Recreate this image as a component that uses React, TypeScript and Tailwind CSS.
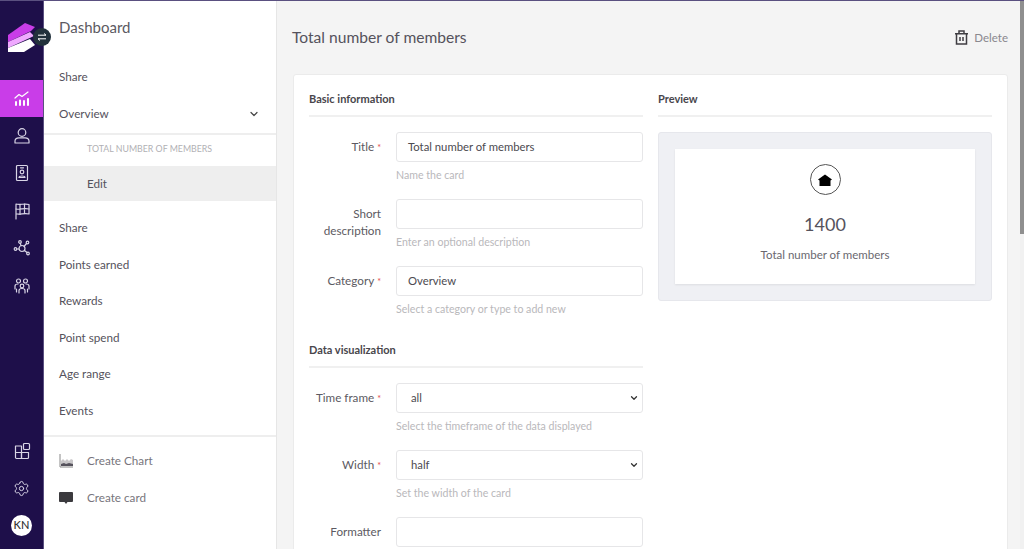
import { ChevronDown, Settings } from "lucide-react"

const font = { fontFamily: '"Lato", "Noto Sans", sans-serif' }

function NavIcon({ children, active }: { children: React.ReactNode; active?: boolean }) {
  return (
    <div className={active ? "flex h-[37px] items-center justify-center bg-[#c93de8]" : "flex h-[37.5px] items-center justify-center"}>
      <svg width="18" height="18" viewBox="0 0 18 18" fill="none" stroke="#d9d5e6" strokeWidth="1.2" strokeLinecap="round" strokeLinejoin="round">
        {children}
      </svg>
    </div>
  )
}

function Logo() {
  return (
    <div className="relative h-[79px] w-[43px]">
      <svg className="absolute left-[6px] top-[21px]" width="31" height="32" viewBox="0 0 31 32">
        <path d="M2 13 L19 1 L29 5 L25 9 L2 20 Z" fill="#c93de8" />
        <path d="M2 20 L24 10 L28 14 L2 26 Z" fill="#efa9ff" />
        <path d="M2 26 L24 17 L29 23 L18 30 L2 30 Z" fill="#ffffff" />
      </svg>
      <div className="absolute left-[33px] top-[27px] flex h-[18px] w-[18px] items-center justify-center rounded-full bg-[#22313c]">
        <svg width="10" height="8" viewBox="0 0 10 8" fill="none" stroke="#fff" strokeWidth="1">
          <path d="M1 2.200 H9 M7 .5 L9 2.200" />
          <path d="M9 5.800 H1 M3 7.500 L1 5.800" />
        </svg>
      </div>
    </div>
  )
}

function IconRail() {
  return (
    <aside className="flex w-[44px] shrink-0 flex-col border-r border-[#5a5080] bg-[#1e0f4a]">
      <Logo />
      <NavIcon active>
        <g stroke="#fff">
          <path d="M2 8 L6 4.500 L9 6.500 L15 2" />
          <path d="M3 12 V15 M7 10.500 V15 M11 11 V15 M15 9 V15" strokeWidth="2" />
        </g>
      </NavIcon>
      <NavIcon>
        <circle cx="9" cy="5.500" r="3.800" />
        <path d="M2 16 V14 C2 12 4 10.800 6 10.800 H12 C14 10.800 16 12 16 14 V16 Z" />
      </NavIcon>
      <NavIcon>
        <rect x="3.500" y="1.500" width="11" height="15" rx="1" />
        <path d="M7.500 3.800 H10.500" />
        <circle cx="9" cy="8" r="1.800" />
        <path d="M6 13.500 C6 11.500 12 11.500 12 13.500 Z" />
      </NavIcon>
      <NavIcon>
        <path d="M3 17 V2 C7 3.500 11 1 16 2.500 V12 C11 10.800 7 13 3 11.800" />
        <path d="M3 7 C7 8 11 5.800 16 7 M7 2.800 V12.300 M11.500 2.200 V11.400" />
      </NavIcon>
      <NavIcon>
        <circle cx="9" cy="9.500" r="3" />
        <circle cx="2.500" cy="10" r="1.300" />
        <circle cx="14.500" cy="3.500" r="1.300" />
        <circle cx="15" cy="14.500" r="1.300" />
        <circle cx="7" cy="3" r="1.300" />
        <path d="M4 10 H6 M11 7.500 L13.500 4.500 M11.500 11.500 L14 13.500 M7.300 4.300 L8 6.600" />
      </NavIcon>
      <NavIcon>
        <circle cx="5.500" cy="4" r="2" />
        <circle cx="12.500" cy="4" r="2" />
        <circle cx="9" cy="9" r="1.800" />
        <path d="M2 12 V9 C2 7.500 3.500 7 5 7 M16 12 V9 C16 7.500 14.500 7 13 7" />
        <path d="M6 16 V13.500 C6 12 7.500 11.500 9 11.500 C10.500 11.500 12 12 12 13.500 V16" />
        <path d="M3.500 12 V15 M14.500 12 V15" />
      </NavIcon>
      <div className="flex-1" />
      <NavIcon>
        <path d="M2.500 4 H8.500 V10.500 H2.500 Z M2.500 10.500 H8.500 V16.500 H3.500 C3 16.500 2.500 16 2.500 15.500 Z" />
        <path d="M8.500 10.500 H15.500 V15.500 C15.500 16 15 16.500 14.500 16.500 H8.500 Z" />
        <rect x="10.500" y="1.500" width="6" height="6" rx="1" />
      </NavIcon>
      <div className="flex h-[37.5px] items-center justify-center">
        <Settings size={17} strokeWidth={1.4} color="#d9d5e6" />
      </div>
      <div className="flex h-[42px] items-start justify-center pt-[7.5px]">
        <div className="flex h-[21px] w-[21px] items-center justify-center rounded-full bg-white text-[11px] font-medium text-[#333]">KN</div>
      </div>
    </aside>
  )
}

function MenuRow({ label }: { label: string }) {
  return <div className="flex h-[36.5px] items-center pl-[15px] text-[11.7px] text-[#55525c]">{label}</div>
}

function MenuPanel() {
  return (
    <aside className="flex w-[233px] shrink-0 flex-col border-r border-[#e6e6e6] bg-white">
      <div className="flex h-[58px] items-center pb-[6px] pl-[15px] text-[15px] text-[#5c5a62]">Dashboard</div>
      <MenuRow label="Share" />
      <div className="flex h-[37px] items-center justify-between pl-[15px] pr-[16px] text-[11.7px] text-[#55525c]">
        Overview
        <ChevronDown size={12} strokeWidth={2.4} color="#444" />
      </div>
      <div className="h-[33.5px] border-t-2 border-[#eeeeee] pl-[43px] pt-[7px] text-[8.8px] leading-[14px] text-[#b1b0b4]">TOTAL NUMBER OF MEMBERS</div>
      <div className="flex h-[35px] items-center bg-[#eeeeee] pl-[43px] text-[11.7px] text-[#55525c]">Edit</div>
      <div className="h-[9px]" />
      <MenuRow label="Share" />
      <MenuRow label="Points earned" />
      <MenuRow label="Rewards" />
      <MenuRow label="Point spend" />
      <MenuRow label="Age range" />
      <MenuRow label="Events" />
      <div className="mt-[6px] border-t-2 border-[#eeeeee] pt-[6px]">
        <div className="flex h-[36.5px] items-center gap-[14px] pl-[15px] text-[11.7px] text-[#77757c]">
          <svg width="14" height="14" viewBox="0 0 14 14">
            <path d="M1 0 V13 H14" fill="none" stroke="#888" strokeWidth="1" />
            <path d="M2 12 V7 L4 5 L6 7 L8 5 L10 7 L12 5 L14 6 V12 Z" fill="#c9c7c9" />
            <path d="M2 12 V10 L5 9 L7 10 L10 9 L14 10 V12 Z" fill="#55525c" />
          </svg>
          Create Chart
        </div>
        <div className="flex h-[36.5px] items-center gap-[14px] pl-[15px] text-[11.7px] text-[#77757c]">
          <svg width="14" height="14" viewBox="0 0 14 14">
            <path d="M1 1 H13 C13.500 1 14 1.500 14 2 V10 C14 10.500 13.500 11 13 11 H8.500 L7 13 L5.500 11 H1 C.5 11 0 10.500 0 10 V2 C0 1.500 .5 1 1 1 Z" fill="#3b3a3e" />
          </svg>
          Create card
        </div>
      </div>
    </aside>
  )
}

function SectionTitle({ children }: { children: React.ReactNode }) {
  return <div className="h-[26px] border-b-2 border-[#f0f0f0] text-[11px] font-bold leading-[16px] text-[#48464c]">{children}</div>
}

function Field({ label, second, required, hint, value, select }: { label: string; second?: string; required?: boolean; hint?: string; value?: string; select?: boolean }) {
  return (
    <div className="flex h-[67px] items-start">
      <div className="w-[72px] shrink-0 pt-[6px] text-right text-[11.7px] leading-[17px] text-[#5c5a62]">
        {label}
        {required && <span className="ml-[3px] text-[9px] text-[#e5484d]">*</span>}
        {second && <div>{second}</div>}
      </div>
      <div className="ml-[15px] flex-1">
        <div className={select ? "flex h-[30px] items-center justify-between rounded-[3px] border border-[#e6e6e8] bg-white pl-[14px] pr-[3px] text-[11.3px] text-[#4c4a50]" : "flex h-[30px] items-center rounded-[3px] border border-[#e6e6e8] bg-white pl-[11px] text-[11.3px] text-[#4c4a50]"}>
          {value}
          {select && <ChevronDown size={10} strokeWidth={3} color="#333" />}
        </div>
        {hint && <div className="mt-[6px] text-[10.6px] leading-[14px] text-[#b9b8bb]">{hint}</div>}
      </div>
    </div>
  )
}

function Preview() {
  return (
    <div className="mt-[15px] h-[169px] rounded-[3px] border border-[#e6e7ec] bg-[#eff0f4] p-[16px]">
      <div className="flex h-[135px] flex-col items-center bg-white pt-[15px] shadow-[0_1px_2px_rgba(0,0,0,0.08)]">
        <div className="flex h-[31px] w-[31px] items-center justify-center rounded-full border border-[#555]">
          <svg width="14" height="12" viewBox="0 0 14 12">
            <path d="M7 .5 L14 5.500 L12.500 6.500 V12 H1.500 V6.500 L0 5.500 Z" fill="#000" />
          </svg>
        </div>
        <div className="mt-[17px] text-[18px] leading-[24px] text-[#55525c]">1400</div>
        <div className="mt-[11px] text-[11.5px] leading-[16px] text-[#6a686f]">Total number of members</div>
      </div>
    </div>
  )
}

export default function App() {
  return (
    <div style={font} className="flex h-[549px] w-[1024px] flex-col overflow-hidden bg-[#f4f4f4]">
      <div className="h-px shrink-0 bg-[#5a5080]" />
      <div className="flex min-h-0 flex-1">
        <IconRail />
        <MenuPanel />
        <main className="min-w-0 flex-1 overflow-hidden pl-[16px] pr-[12px]">
          <header className="flex h-[73px] items-center justify-between">
            <h1 className="-ml-px text-[15.6px] text-[#55525c]">Total number of members</h1>
            <div className="flex items-center gap-[6px] text-[11.5px] text-[#8a888e]">
              <svg width="13" height="15" viewBox="0 0 13 15" fill="none" stroke="#3f3d42" strokeWidth="1.500">
                <path d="M0 3.800 H13 M4 3.800 V1 H9 V3.800" />
                <path d="M1.500 3.800 V14 H11.500 V3.800" />
                <path d="M5 7 V11 M8 7 V11" />
              </svg>
              Delete
            </div>
          </header>
          <div className="flex h-[480px] gap-[15px] rounded-[3px] border border-[#ebebeb] bg-white px-[15px] pt-[16px]">
            <section className="w-[334px] shrink-0">
              <SectionTitle>Basic information</SectionTitle>
              <div className="mt-[15px]">
                <Field label="Title" required value="Total number of members" hint="Name the card" />
                <Field label="Short" second="description" hint="Enter an optional description" />
                <Field label="Category" required value="Overview" hint="Select a category or type to add new" />
              </div>
              <div className="mt-[9px]">
                <SectionTitle>Data visualization</SectionTitle>
              </div>
              <div className="mt-[15px]">
                <Field label="Time frame" required select value="all" hint="Select the timeframe of the data displayed" />
                <Field label="Width" required select value="half" hint="Set the width of the card" />
                <Field label="Formatter" />
              </div>
            </section>
            <section className="w-[334px] shrink-0">
              <SectionTitle>Preview</SectionTitle>
              <Preview />
            </section>
          </div>
        </main>
        <div className="flex w-[4px] shrink-0 flex-col bg-[#f1f1f1]">
          <div className="h-[233px] bg-[#8f8f8f]" />
        </div>
      </div>
    </div>
  )
}
